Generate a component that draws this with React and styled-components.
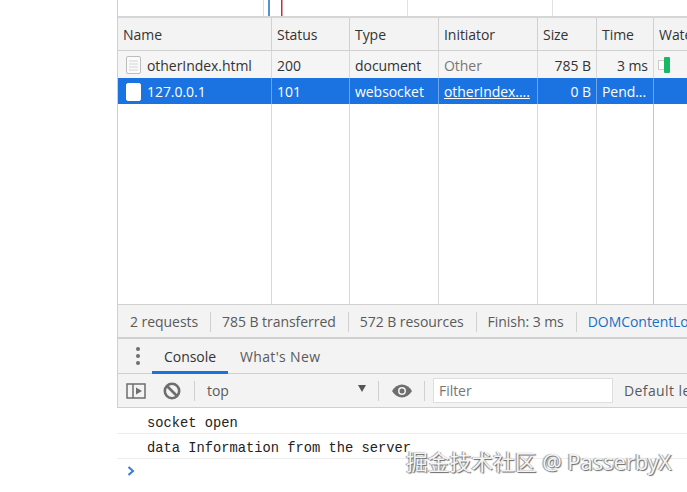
import React from "react";
import styled, { createGlobalStyle } from "styled-components";

const Global = createGlobalStyle`
  html, body { margin: 0; padding: 0; overflow: hidden; background: #fff; }
  #root { width: 687px; height: 492px; }
  * { box-sizing: border-box; }
`;

const columns = "154px 78px 89px 99px 59px 57px 1fr";

const Page = styled.div`
  position: relative;
  width: 687px;
  height: 492px;
  padding-left: 117px;
  overflow: hidden;
  font-family: "Open Sans", "Noto Sans", sans-serif;
  font-size: 14px;
  letter-spacing: -0.05px;
  color: #333;
`;

const Panel = styled.div`
  width: 570px;
  height: 408px;
  border-left: 1px solid #d0d0d0;
  display: flex;
  flex-direction: column;
`;

const Overview = styled.svg`
  display: block;
  width: 100%;
  height: 16px;
  flex: none;
`;

const Network = styled.div`
  height: 288px;
  flex: none;
  border-top: 2px solid #d6d6d6;
  display: flex;
  flex-direction: column;
`;

const Row = styled.div`
  display: grid;
  grid-template-columns: ${columns};
  flex: none;
  height: ${(p) => p.$height}px;
  background: ${(p) => p.$bg};
  color: ${(p) => p.$color || "#333"};
  border-bottom: ${(p) => (p.$line ? "1px solid #d0d0d0" : "none")};
`;

const FillRow = styled(Row)`
  flex: 1;
`;

const Cell = styled.div`
  display: flex;
  align-items: center;
  justify-content: ${(p) => (p.$right ? "flex-end" : "flex-start")};
  gap: 5px;
  padding: ${(p) => (p.$data ? "1px 5px 0" : "0 5px")};
  min-width: 0;
  overflow: hidden;
  white-space: nowrap;
  border-right: 1px solid ${(p) => p.$line || "#d8d8d8"};
  color: ${(p) => p.$color || "inherit"};

  &:last-child { border-right: none; }
`;

const LinkText = styled.span`
  text-decoration: underline;
`;

const FileIcon = styled.svg`
  width: 17px;
  height: 20px;
  margin-left: 2px;
  flex: none;
`;

const StatusBar = styled.div`
  height: 35px;
  flex: none;
  display: flex;
  align-items: center;
  background: #f3f3f3;
  border-top: 1px solid #d0d0d0;
  border-bottom: 2px solid #d0d0d0;
  padding: 2px 0 0 12px;
  white-space: nowrap;
  color: #5a5a5a;
`;

const StatusItem = styled.span`
  padding-right: 12px;
  margin-right: 11px;
  line-height: 20px;
  border-right: 1px solid #d0d0d0;
  color: ${(p) => p.$color || "inherit"};

  &:last-child { border-right: none; }
`;

const Tabs = styled.div`
  height: 35px;
  flex: none;
  display: flex;
  background: #f3f3f3;
  border-bottom: 1px solid #cfcfcf;
  color: #5a5a5a;
`;

const Dots = styled.div`
  width: 34px;
  display: flex;
  flex-direction: column;
  align-items: center;
  justify-content: center;
  gap: 3px;
  padding-left: 5px;

  i {
    width: 4px;
    height: 4px;
    border-radius: 50%;
    background: #6e6e6e;
  }
`;

const Tab = styled.div`
  padding: 3px 12px 0;
  display: flex;
  align-items: center;
  letter-spacing: ${(p) => (p.$active ? "-0.05px" : "0.35px")};
  color: ${(p) => (p.$active ? "#333" : "#5a5a5a")};
  border-bottom: 3px solid ${(p) => (p.$active ? "#1a73d8" : "transparent")};
  margin-bottom: -1px;
`;

const Toolbar = styled.div`
  height: 34px;
  flex: none;
  display: flex;
  align-items: center;
  background: #f3f3f3;
  border-bottom: 1px solid #cfcfcf;
  color: #5a5a5a;
  white-space: nowrap;
`;

const ToolIcon = styled.div`
  width: ${(p) => p.$width}px;
  display: flex;
  align-items: center;
  justify-content: center;
  flex: none;
`;

const ToolDivider = styled.div`
  width: 1px;
  height: 20px;
  margin-left: ${(p) => p.$gap || 0}px;
  background: #d0d0d0;
  flex: none;
`;

const ContextSelect = styled.div`
  width: 183px;
  padding: 0 12px;
  display: flex;
  justify-content: space-between;
  align-items: center;
  flex: none;

  b {
    width: 0;
    height: 0;
    border-left: 4px solid transparent;
    border-right: 4px solid transparent;
    border-top: 7px solid #555;
    margin-top: -4px;
  }
`;

const Filter = styled.div`
  width: 180px;
  height: 25px;
  margin-left: 8px;
  margin-right: 11px;
  padding-left: 5px;
  background: #fff;
  border: 1px solid #dedede;
  display: flex;
  align-items: center;
  color: #777;
  flex: none;
`;

const Levels = styled.span`
  letter-spacing: 0.4px;
`;

const LogRow = styled.div`
  height: ${(p) => p.$height}px;
  padding: 5px 0 0 30px;
  display: flex;
  align-items: center;
  font-family: "Liberation Mono", monospace;
  font-size: 13.75px;
  letter-spacing: 0;
  color: #222;
  border-bottom: 1px solid #ececec;
  white-space: nowrap;
`;

const Prompt = styled.div`
  padding: 7px 0 0 10px;
  line-height: 0;
`;

const Watermark = styled.div`
  position: absolute;
  left: 406px;
  top: 447px;
  font-family: "Noto Sans", "Noto Sans CJK SC", sans-serif;
  font-size: 21.75px;
  line-height: 30px;
  letter-spacing: 0;
  white-space: nowrap;
  color: #f4f4f4;
  text-shadow: 1px 1px 1px #666, -1px 0 1px #888;
`;

const Waterfall = styled.svg`
  width: 22px;
  height: 18px;
  margin-left: -1px;
  flex: none;
`;

const PageIcon = ({ selected }) => (
  <FileIcon viewBox="0 0 17 20">
    <rect x="1.5" y="1.5" width="14" height="17" rx="1.5" fill={selected ? "#fff" : "#fafafa"} stroke={selected ? "#fff" : "#bdbdbd"} />
    {!selected && <path d="M4 6h9M4 9h9M4 12h9M4 15h9" stroke="#d4d4d4" />}
  </FileIcon>
);

export default function App() {
  return (
    <Page>
      <Global />
      <Panel>
        <Overview viewBox="0 0 569 16">
          <rect x="145" width="1" height="16" fill="#dcdcdc" />
          <rect x="150" width="2" height="16" fill="#5a8fd6" />
          <rect x="163" width="1.5" height="16" fill="#c4303a" />
          <rect x="289" width="1" height="16" fill="#e2e2e2" />
          <rect x="434" width="1" height="16" fill="#e2e2e2" />
        </Overview>
        <Network>
          <Row $height={33} $bg="#f3f3f3" $line>
            <Cell $line="#d0d0d0">Name</Cell>
            <Cell $line="#d0d0d0">Status</Cell>
            <Cell $line="#d0d0d0">Type</Cell>
            <Cell $line="#d0d0d0">Initiator</Cell>
            <Cell $line="#d0d0d0">Size</Cell>
            <Cell $line="#d0d0d0">Time</Cell>
            <Cell>Waterfall</Cell>
          </Row>
          <Row $height={27} $bg="#f5f5f5">
            <Cell $data><PageIcon />otherIndex.html</Cell>
            <Cell $data>200</Cell>
            <Cell $data>document</Cell>
            <Cell $data $color="#777">Other</Cell>
            <Cell $data $right>785 B</Cell>
            <Cell $data $right>3 ms</Cell>
            <Cell>
              <Waterfall viewBox="0 0 22 18">
                <rect x="0.5" y="4.5" width="6" height="9" fill="#fff" stroke="#ccc" />
                <rect x="6" y="1" width="6" height="16" rx="1" fill="#17b866" />
              </Waterfall>
            </Cell>
          </Row>
          <Row $height={26} $bg="#1a73e0" $color="#fff">
            <Cell $data $line="#6fa6ea"><PageIcon selected />127.0.0.1</Cell>
            <Cell $data $line="#6fa6ea">101</Cell>
            <Cell $data $line="#6fa6ea">websocket</Cell>
            <Cell $data $line="#6fa6ea"><LinkText>otherIndex....</LinkText></Cell>
            <Cell $data $line="#6fa6ea" $right>0 B</Cell>
            <Cell $data $line="#6fa6ea">Pend...</Cell>
            <Cell />
          </Row>
          <FillRow $bg="#fff">
            <Cell />
            <Cell />
            <Cell />
            <Cell />
            <Cell />
            <Cell $line="#c4c4c4" />
            <Cell />
          </FillRow>
        </Network>
        <StatusBar>
          <StatusItem>2 requests</StatusItem>
          <StatusItem>785 B transferred</StatusItem>
          <StatusItem>572 B resources</StatusItem>
          <StatusItem>Finish: 3 ms</StatusItem>
          <StatusItem $color="#1a6fc4">DOMContentLoaded: 36 ms</StatusItem>
        </StatusBar>
        <Tabs>
          <Dots><i /><i /><i /></Dots>
          <Tab $active>Console</Tab>
          <Tab>What's New</Tab>
        </Tabs>
        <Toolbar>
          <ToolIcon $width={36}>
            <svg width="20" height="16" viewBox="0 0 20 16" fill="none">
              <rect x="1" y="1" width="18" height="14" stroke="#6e6e6e" strokeWidth="1.5" />
              <path d="M7 1v14" stroke="#6e6e6e" strokeWidth="1.5" />
              <path d="M10 4.5l6 3.5-6 3.5z" fill="#6e6e6e" />
            </svg>
          </ToolIcon>
          <ToolIcon $width={36}>
            <svg width="18" height="18" viewBox="0 0 18 18" fill="none" stroke="#6e6e6e" strokeWidth="2.6">
              <circle cx="9" cy="9" r="7.2" />
              <path d="M4 4l10 10" />
            </svg>
          </ToolIcon>
          <ToolDivider $gap={4} />
          <ContextSelect>top<b /></ContextSelect>
          <ToolDivider />
          <ToolIcon $width={45}>
            <svg width="20" height="14" viewBox="0 0 20 14">
              <path d="M0 7C2.5 2.8 6 .5 10 .5S17.5 2.8 20 7c-2.5 4.2-6 6.5-10 6.500S2.500 11.200 0 7z" fill="#6e6e6e" />
              <circle cx="10" cy="7" r="4" fill="#f3f3f3" />
              <circle cx="10" cy="7" r="2.5" fill="#6e6e6e" />
            </svg>
          </ToolIcon>
          <ToolDivider />
          <Filter>Filter</Filter>
          <Levels>Default levels</Levels>
        </Toolbar>
      </Panel>
      <LogRow $height={26}>socket open</LogRow>
      <LogRow $height={25}>data Information from the server</LogRow>
      <Prompt>
        <svg width="8" height="10" viewBox="0 0 8 10" fill="none">
          <path d="M1.5 1L6 5 1.500 9" stroke="#3b78d8" strokeWidth="2" />
        </svg>
      </Prompt>
      <Watermark>掘金技术社区 @ PasserbyX</Watermark>
    </Page>
  );
}
